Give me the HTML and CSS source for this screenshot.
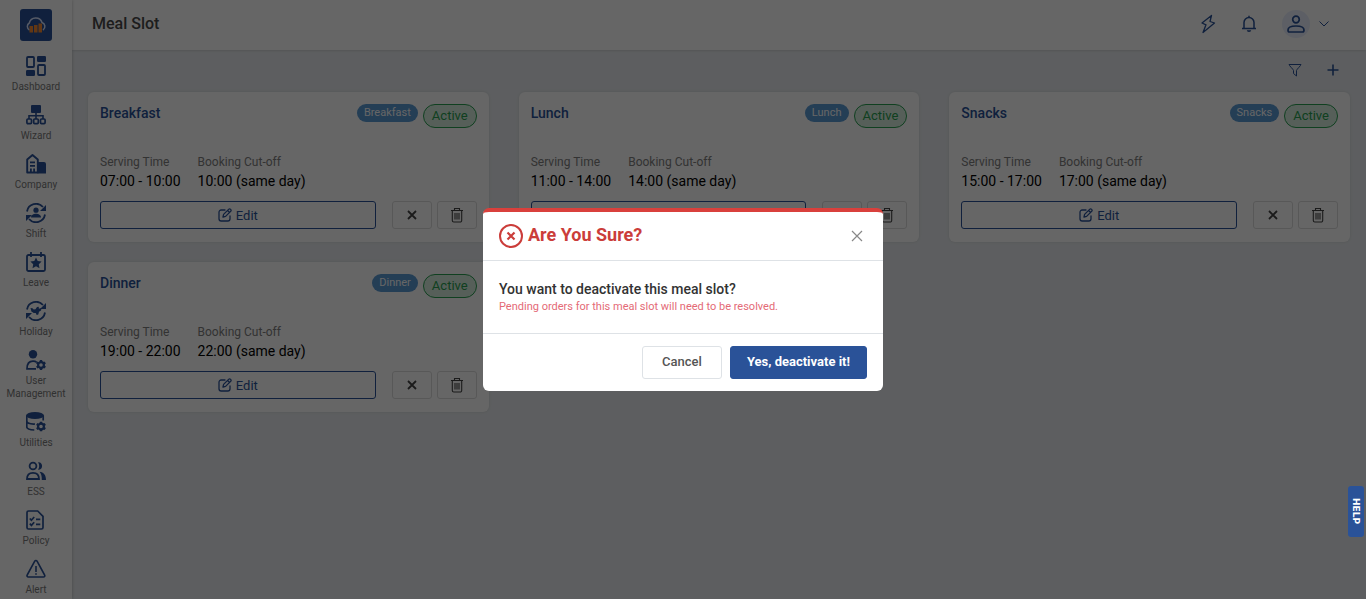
FILE: index.html
```html
<!DOCTYPE html>
<html lang="en">
<head>
  <meta charset="UTF-8">
  <meta name="viewport" content="width=device-width, initial-scale=1">
  <title>Meal Slot</title>
  <link rel="stylesheet" href="styles.css">
</head>
<body>

  <!-- shared icons -->
  <svg class="icon-defs" aria-hidden="true">
    <symbol id="i-edit" viewBox="0 0 14 14">
      <path d="M7 2H3.200A2.200 2.200 0 0 0 1 4.200v6.600A2.200 2.200 0 0 0 3.200 13h6.600a2.200 2.200 0 0 0 2.200-2.200V8M5 9l.6-2.600 5-5a1.300 1.300 0 0 1 2 2l-5 5zM9.600 2.500l2 2" fill="none" stroke="currentColor" stroke-width="1.300" stroke-linejoin="round" stroke-linecap="round"/>
    </symbol>
    <symbol id="i-cross" viewBox="0 0 10 10">
      <path d="M1 1l8 8M9 1L1 9" fill="none" stroke="currentColor" stroke-width="1.800"/>
    </symbol>
    <symbol id="i-trash" viewBox="0 0 14 16">
      <path d="M1 3.500h12M4.500 3.300V1.500h5v1.800M2.300 3.800v9.700a1.500 1.500 0 0 0 1.500 1.500h6.400a1.500 1.500 0 0 0 1.500-1.500V3.800M5 6v6.500M7 6v6.500M9 6v6.500" fill="none" stroke="currentColor" stroke-width="1.100"/>
    </symbol>
    <symbol id="i-gear" viewBox="0 0 10 10">
      <path d="M5 0v2.500M5 7.500V10M.7 2.500l2 1.200M7.300 6.300l2 1.200M9.300 2.500l-2 1.200M2.700 6.300l-2 1.200" stroke="currentColor" stroke-width="2.400"/>
      <circle cx="5" cy="5" r="2.900" fill="none" stroke="currentColor" stroke-width="2.200"/>
    </symbol>
    <symbol id="i-cycle" viewBox="0 0 20 20">
      <path d="M1 8.500A9.200 9.200 0 0 1 17 4M19 11.500A9.200 9.200 0 0 1 3 16" fill="none" stroke="currentColor" stroke-width="1.800"/>
      <path d="M20 2v6h-6zM0 18v-6h6z" fill="currentColor"/>
    </symbol>
  </svg>

  <nav class="sidebar">
    <a class="logo" href="#" aria-label="Home">
      <svg width="22" height="18" viewBox="0 0 22 18">
        <path d="M4.500 14A4 4 0 0 1 4.300 7 6.600 6.600 0 0 1 17 6.500 4.200 4.200 0 0 1 18 14" fill="none" stroke="#d6e2ff" stroke-width="1.500"/>
        <path d="M4.500 10h3.500v6.500H4.500zM9 9h3.500v7.500H9zM13.500 7.500H17v9h-3.500z" fill="#f58a33"/>
      </svg>
    </a>
    <ul class="menu">
      <li><a href="#">
        <svg viewBox="0 0 20 20"><rect x="1" y="1" width="7" height="10" rx="1" fill="none" stroke="currentColor" stroke-width="1.800"/><rect x="11" width="9" height="6" rx="1.200" fill="currentColor"/><rect y="14" width="9" height="6" rx="1.200" fill="currentColor"/><rect x="12" y="9" width="7" height="10" rx="1" fill="none" stroke="currentColor" stroke-width="1.800"/></svg>
        <span>Dashboard</span></a></li>
      <li><a href="#">
        <svg viewBox="0 0 20 20"><rect x="5" y="0" width="10" height="8" rx="1" fill="currentColor"/><path d="M10 7v7M3 14v-3.200h14V14" fill="none" stroke="currentColor" stroke-width="1.600"/><g fill="none" stroke="currentColor" stroke-width="1.700"><rect x=".9" y="14" width="4.600" height="4.600" rx="1"/><rect x="7.700" y="14" width="4.600" height="4.600" rx="1"/><rect x="14.500" y="14" width="4.600" height="4.600" rx="1"/></g></svg>
        <span>Wizard</span></a></li>
      <li><a href="#">
        <svg viewBox="0 0 20 20"><path d="M1.200 18.500V5.500L6.500 1l5.300 4.500v13z" fill="none" stroke="currentColor" stroke-width="1.900" stroke-linejoin="round"/><path d="M11.500 8H18a2 2 0 0 1 2 2v9.500h-8.500zM4 7.500h5v1.700H4zM4 11h5v1.700H4zM4 14.500h1.800v4H4zM7.200 14.500H9v4H7.200z" fill="currentColor"/></svg>
        <span>Company</span></a></li>
      <li><a href="#">
        <svg viewBox="0 0 20 20"><use href="#i-cycle"/><circle cx="10" cy="7.200" r="2.600" fill="currentColor"/><path d="M5 14.500c0-5 10-5 10 0z" fill="currentColor"/></svg>
        <span>Shift</span></a></li>
      <li><a href="#">
        <svg viewBox="0 0 20 20"><rect x="1" y="3" width="18" height="16" rx="1.500" fill="none" stroke="currentColor" stroke-width="1.800"/><path d="M5 0v5M15 0v5" stroke="currentColor" stroke-width="1.800"/><path d="M10 5.500l1.700 3.500 3.900.6-2.800 2.700.7 3.900-3.500-1.900-3.500 1.900.7-3.900-2.800-2.700 3.900-.6z" fill="currentColor"/></svg>
        <span>Leave</span></a></li>
      <li><a href="#">
        <svg viewBox="0 0 20 20"><use href="#i-cycle"/><path d="M4.500 7l2 .2 1.200 1.300 1.800-.2L11 6l1.700-.3.200 2 2.700-.8-.6 2.600-2 1.300-.7 2.600-1.600.7-1-2-2-.1-2.300-1.600z" fill="currentColor"/></svg>
        <span>Holiday</span></a></li>
      <li><a href="#">
        <svg viewBox="0 0 20 20"><circle cx="7" cy="4.200" r="4.200" fill="currentColor"/><path d="M10 18.800H1c0-5 2.500-7.600 6-7.600 1.500 0 2.800.4 3.800 1.200" fill="none" stroke="currentColor" stroke-width="1.700"/><use href="#i-gear" x="10" y="10" width="10" height="10"/></svg>
        <span>User Management</span></a></li>
      <li><a href="#">
        <svg viewBox="0 0 20 20"><ellipse cx="9" cy="3.500" rx="9" ry="3.500" fill="currentColor"/><path d="M.8 3.500V15c0 1.700 3 2.800 7.500 3M.8 9.200C1 11 4.500 12.200 9 12M17.200 3.500v5" fill="none" stroke="currentColor" stroke-width="1.700"/><use href="#i-gear" x="10" y="9.500" width="10" height="10"/></svg>
        <span>Utilities</span></a></li>
      <li><a href="#">
        <svg viewBox="0 0 20 20"><g fill="none" stroke="currentColor" stroke-width="1.800"><circle cx="7" cy="5" r="3.400"/><path d="M1 18c0-4 2.400-6.200 6-6.200S13 14 13 18z"/></g><path d="M12 1.200c5.500-.6 5.500 8.100 0 7.600 1.600-2.300 1.600-5.300 0-7.600zM13.500 10.800c4.200.2 6.500 3.400 6.500 8.200h-4.200c.1-3.800-.6-6.400-2.300-8.200z" fill="currentColor"/></svg>
        <span>ESS</span></a></li>
      <li><a href="#">
        <svg viewBox="0 0 20 20"><path d="M2.500 1h9.200L17 6.300v11.200a1.500 1.500 0 0 1-1.500 1.500h-13A1.500 1.500 0 0 1 1 17.500v-15A1.500 1.500 0 0 1 2.500 1z" fill="none" stroke="currentColor" stroke-width="1.700"/><path d="M3.800 8.500l1.600 1.700L8.200 7M3.800 13.700l1.600 1.700 2.800-3.200M10 9.300h4.300M10 14.300h4.300" fill="none" stroke="currentColor" stroke-width="1.700"/></svg>
        <span>Policy</span></a></li>
      <li><a href="#">
        <svg viewBox="0 0 20 20"><path d="M8.600 2.300a1.500 1.500 0 0 1 2.600 0L18.600 16a1.300 1.300 0 0 1-1.100 2H2.300a1.300 1.300 0 0 1-1.100-2zM10 7v6M10 14.300v1.500" fill="none" stroke="currentColor" stroke-width="1.600"/></svg>
        <span>Alert</span></a></li>
    </ul>
  </nav>

  <div class="page">
    <header class="topbar">
      <h1>Meal Slot</h1>
      <div class="topbar-actions">
        <button type="button" aria-label="Quick actions">
          <svg width="16" height="20" viewBox="0 0 16 20"><path d="M11.500 1.500L2 9l4 1.800L3 18.500 14.500 9 10 7.500z" fill="none" stroke="currentColor" stroke-width="1.300" stroke-linejoin="round"/></svg>
        </button>
        <button type="button" aria-label="Notifications">
          <svg width="16" height="18" viewBox="0 0 16 18"><path d="M1 13.500h14M3 13.500V7.500a5 5 0 0 1 10 0v6M8 .8v2" fill="none" stroke="currentColor" stroke-width="1.500"/><path d="M5.800 15.300h4.400a2.200 1.800 0 0 1-4.400 0z" fill="currentColor"/></svg>
        </button>
        <button type="button" class="profile" aria-label="Profile">
          <span class="avatar"><svg width="18" height="18" viewBox="0 0 18 18" fill="none" stroke="currentColor" stroke-width="1.700"><circle cx="9" cy="4.500" r="3.300"/><path d="M1 15c0-2.500 3.500-4 8-4s8 1.500 8 4c0 1.300-.5 2-1.500 2h-13C1.500 17 1 16.300 1 15z"/></svg></span>
          <svg width="10" height="6" viewBox="0 0 10 6"><path d="M.5.5L5 5 9.500.5" fill="none" stroke="currentColor"/></svg>
        </button>
      </div>
    </header>

    <main>
      <div class="toolbar">
        <button type="button" aria-label="Filter">
          <svg width="14" height="14" viewBox="0 0 14 14"><path d="M1 1.500h12c0 1-4.500 5-4.500 6V13L5.500 10.500v-3c0-1-4.500-5-4.500-6z" fill="none" stroke="currentColor" stroke-linejoin="round"/></svg>
        </button>
        <button type="button" aria-label="Add meal slot">
          <svg width="12" height="12" viewBox="0 0 12 12"><path d="M6 .5v11M.5 6h11" stroke="currentColor" stroke-width="1.600"/></svg>
        </button>
      </div>

      <div class="cards">
        <section class="card">
          <div class="card-head">
            <h2>Breakfast</h2>
            <span class="tag">Breakfast</span>
            <span class="status">Active</span>
          </div>
          <dl class="times">
            <div><dt>Serving Time</dt><dd>07:00 - 10:00</dd></div>
            <div><dt>Booking Cut-off</dt><dd>10:00 (same day)</dd></div>
          </dl>
          <div class="card-actions">
            <button type="button" class="btn-edit"><svg width="14" height="14"><use href="#i-edit"/></svg>Edit</button>
            <button type="button" class="btn-icon" aria-label="Deactivate"><svg width="10" height="10"><use href="#i-cross"/></svg></button>
            <button type="button" class="btn-icon" aria-label="Delete"><svg width="14" height="16"><use href="#i-trash"/></svg></button>
          </div>
        </section>

        <section class="card">
          <div class="card-head">
            <h2>Lunch</h2>
            <span class="tag">Lunch</span>
            <span class="status">Active</span>
          </div>
          <dl class="times">
            <div><dt>Serving Time</dt><dd>11:00 - 14:00</dd></div>
            <div><dt>Booking Cut-off</dt><dd>14:00 (same day)</dd></div>
          </dl>
          <div class="card-actions">
            <button type="button" class="btn-edit"><svg width="14" height="14"><use href="#i-edit"/></svg>Edit</button>
            <button type="button" class="btn-icon" aria-label="Deactivate"><svg width="10" height="10"><use href="#i-cross"/></svg></button>
            <button type="button" class="btn-icon" aria-label="Delete"><svg width="14" height="16"><use href="#i-trash"/></svg></button>
          </div>
        </section>

        <section class="card">
          <div class="card-head">
            <h2>Snacks</h2>
            <span class="tag">Snacks</span>
            <span class="status">Active</span>
          </div>
          <dl class="times">
            <div><dt>Serving Time</dt><dd>15:00 - 17:00</dd></div>
            <div><dt>Booking Cut-off</dt><dd>17:00 (same day)</dd></div>
          </dl>
          <div class="card-actions">
            <button type="button" class="btn-edit"><svg width="14" height="14"><use href="#i-edit"/></svg>Edit</button>
            <button type="button" class="btn-icon" aria-label="Deactivate"><svg width="10" height="10"><use href="#i-cross"/></svg></button>
            <button type="button" class="btn-icon" aria-label="Delete"><svg width="14" height="16"><use href="#i-trash"/></svg></button>
          </div>
        </section>

        <section class="card">
          <div class="card-head">
            <h2>Dinner</h2>
            <span class="tag">Dinner</span>
            <span class="status">Active</span>
          </div>
          <dl class="times">
            <div><dt>Serving Time</dt><dd>19:00 - 22:00</dd></div>
            <div><dt>Booking Cut-off</dt><dd>22:00 (same day)</dd></div>
          </dl>
          <div class="card-actions">
            <button type="button" class="btn-edit"><svg width="14" height="14"><use href="#i-edit"/></svg>Edit</button>
            <button type="button" class="btn-icon" aria-label="Deactivate"><svg width="10" height="10"><use href="#i-cross"/></svg></button>
            <button type="button" class="btn-icon" aria-label="Delete"><svg width="14" height="16"><use href="#i-trash"/></svg></button>
          </div>
        </section>
      </div>
    </main>
  </div>

  <div class="overlay">
    <div class="modal" role="dialog" aria-modal="true" aria-labelledby="modalTitle">
      <div class="modal-header">
        <svg width="24" height="24" viewBox="0 0 24 24" fill="none" stroke="currentColor"><circle cx="12" cy="12" r="11" stroke-width="2"/><path d="M8.500 8.500l7 7M15.500 8.500l-7 7" stroke-width="2.200"/></svg>
        <h3 id="modalTitle">Are You Sure?</h3>
        <button type="button" class="modal-close" aria-label="Close">
          <svg width="12" height="12" viewBox="0 0 12 12"><path d="M1 1l10 10M11 1L1 11" stroke="currentColor" stroke-width="1.200"/></svg>
        </button>
      </div>
      <div class="modal-body">
        <p class="question">You want to deactivate this meal slot?</p>
        <p class="warning">Pending orders for this meal slot will need to be resolved.</p>
      </div>
      <div class="modal-footer">
        <button type="button" class="btn-cancel">Cancel</button>
        <button type="button" class="btn-confirm">Yes, deactivate it!</button>
      </div>
    </div>
  </div>

  <button type="button" class="help">HELP</button>

</body>
</html>
```

FILE: styles.css
```css
* {
  box-sizing: border-box;
}

body {
  margin: 0;
  display: flex;
  height: 100vh;
  overflow: hidden;
  font-family: Roboto, "Liberation Sans", sans-serif;
  font-size: 14px;
  color: #000;
  background-color: #e8ecef;
}

h1, h2, h3, p, ul, dl, dd {
  margin: 0;
  padding: 0;
}

button {
  font-family: inherit;
  cursor: pointer;
}

.icon-defs {
  position: absolute;
  width: 0;
  height: 0;
}

/* sidebar */
.sidebar {
  flex: 0 0 72px;
  display: flex;
  flex-direction: column;
  align-items: center;
  padding-top: 9px;
  background-color: #fff;
  box-shadow: 0 0 3px rgba(0,0,0,0.25);
  z-index: 1;
}

.logo {
  display: flex;
  flex-shrink: 0;
  align-items: center;
  justify-content: center;
  width: 32px;
  height: 32px;
  border-radius: 3px;
  background-color: #2a5298;
}

.menu {
  width: 100%;
  margin-top: 15px;
  list-style: none;
}

.menu a {
  display: flex;
  flex-direction: column;
  align-items: center;
  gap: 4px;
  padding-bottom: 12px;
  font-size: 10px;
  line-height: 13px;
  text-align: center;
  text-decoration: none;
  color: #7a7a7a;
}

.menu svg {
  width: 20px;
  height: 20px;
  color: #2a5298;
}

/* top bar */
.page {
  flex: 1;
  min-width: 0;
}

.topbar {
  display: flex;
  align-items: center;
  justify-content: space-between;
  height: 50px;
  padding: 0 37px 2px 20px;
  background-color: #fff;
  box-shadow: 0 0 3px rgba(0,0,0,0.2);
}

.topbar h1 {
  font-size: 16px;
  font-weight: 500;
  line-height: 24px;
  color: #4a4a4a;
}

.topbar-actions {
  display: flex;
  align-items: center;
  gap: 25px;
}

.topbar-actions button,
.toolbar button {
  display: flex;
  align-items: center;
  padding: 0;
  border: none;
  background: none;
  color: #2a5298;
}

.topbar-actions .profile {
  gap: 9px;
}

.avatar {
  display: flex;
  align-items: center;
  justify-content: center;
  width: 28px;
  height: 28px;
  border-radius: 50%;
  background-color: #e8eefc;
}

/* content */
main {
  padding: 0 16px;
}

.toolbar {
  display: flex;
  justify-content: flex-end;
  align-items: center;
  gap: 25px;
  height: 42px;
  padding: 0 11px 2px 0;
}

.cards {
  display: grid;
  grid-template-columns: repeat(3, 1fr);
  gap: 20px 30px;
}

.card {
  padding: 12px;
  border-radius: 6px;
  background-color: #fff;
  box-shadow: 0 0 3px rgba(0,0,0,0.1);
}

.card-head {
  display: flex;
  align-items: flex-start;
  gap: 5px;
  height: 48px;
}

.card-head h2 {
  margin-right: auto;
  font-size: 14px;
  font-weight: 500;
  line-height: 18px;
  color: #2a5298;
}

.tag {
  padding: 0 7px;
  border-radius: 9px;
  font-size: 11px;
  line-height: 18px;
  color: #fff;
  background-color: #5a9bd5;
}

.status {
  padding: 0 8px;
  border: 1px solid #28a050;
  border-radius: 12px;
  font-size: 13px;
  line-height: 22px;
  color: #28a050;
  background-color: #d8eedf;
}

.times {
  display: flex;
  gap: 17px;
}

.times dt {
  font-size: 12px;
  line-height: 20px;
  color: #808080;
}

.times dd {
  font-size: 14px;
  line-height: 18px;
}

.card-actions {
  display: flex;
  gap: 5px;
  margin-top: 11px;
  padding-bottom: 1px;
}

.card-actions button {
  display: flex;
  align-items: center;
  justify-content: center;
  height: 28px;
  padding: 0;
  border-radius: 3px;
  background-color: #fff;
}

.card-actions .btn-edit {
  flex: 1;
  gap: 4px;
  margin-right: 11px;
  border: 1px solid #2a5298;
  font-size: 13px;
  color: #2a5298;
}

.card-actions .btn-icon {
  width: 40px;
  border: 1px solid #ddd;
  color: #444;
}

/* confirm dialog */
.overlay {
  position: fixed;
  inset: 0;
  z-index: 10;
  display: flex;
  align-items: center;
  justify-content: center;
  background-color: rgba(0,0,0,0.6);
}

.modal {
  width: 400px;
  border-top: 4px solid #d9403c;
  border-radius: 6px;
  background-color: #fff;
}

.modal-header {
  display: flex;
  align-items: center;
  gap: 5px;
  padding: 12px 20px 12px 16px;
  border-bottom: 1px solid #dee2e6;
  color: #cb3d3a;
}

.modal-header h3 {
  padding-bottom: 2px;
  font-size: 18px;
  font-weight: 700;
  line-height: 22px;
}

.modal-close {
  display: flex;
  margin-left: auto;
  padding: 0;
  border: none;
  background: none;
  color: #888;
}

.modal-body {
  padding: 18px 16px;
  border-bottom: 1px solid #dee2e6;
}

.question {
  font-size: 14px;
  font-weight: 500;
  line-height: 20px;
  color: #333;
}

.warning {
  font-size: 11px;
  line-height: 16px;
  color: #e46a76;
}

.modal-footer {
  display: flex;
  justify-content: flex-end;
  gap: 8px;
  padding: 12px 16px;
}

.modal-footer button {
  height: 33px;
  padding: 0 16px 2px;
  border: 1px solid #2a5298;
  border-radius: 3px;
  font-size: 13px;
  font-weight: 700;
  color: #fff;
  background-color: #2a5298;
}

.modal-footer .btn-cancel {
  padding: 0 19px 2px;
  border-color: #dee2e6;
  font-weight: 500;
  color: #555;
  background-color: #fff;
}

/* help tab on the right edge */
.help {
  position: fixed;
  right: 2px;
  top: 486px;
  z-index: 11;
  height: 51px;
  width: 16px;
  padding: 0;
  border: none;
  border-radius: 3px;
  writing-mode: vertical-rl;
  font-family: "DejaVu Sans", sans-serif;
  font-size: 9px;
  font-weight: 700;
  color: #fff;
  background-color: #2a5298;
}
```
